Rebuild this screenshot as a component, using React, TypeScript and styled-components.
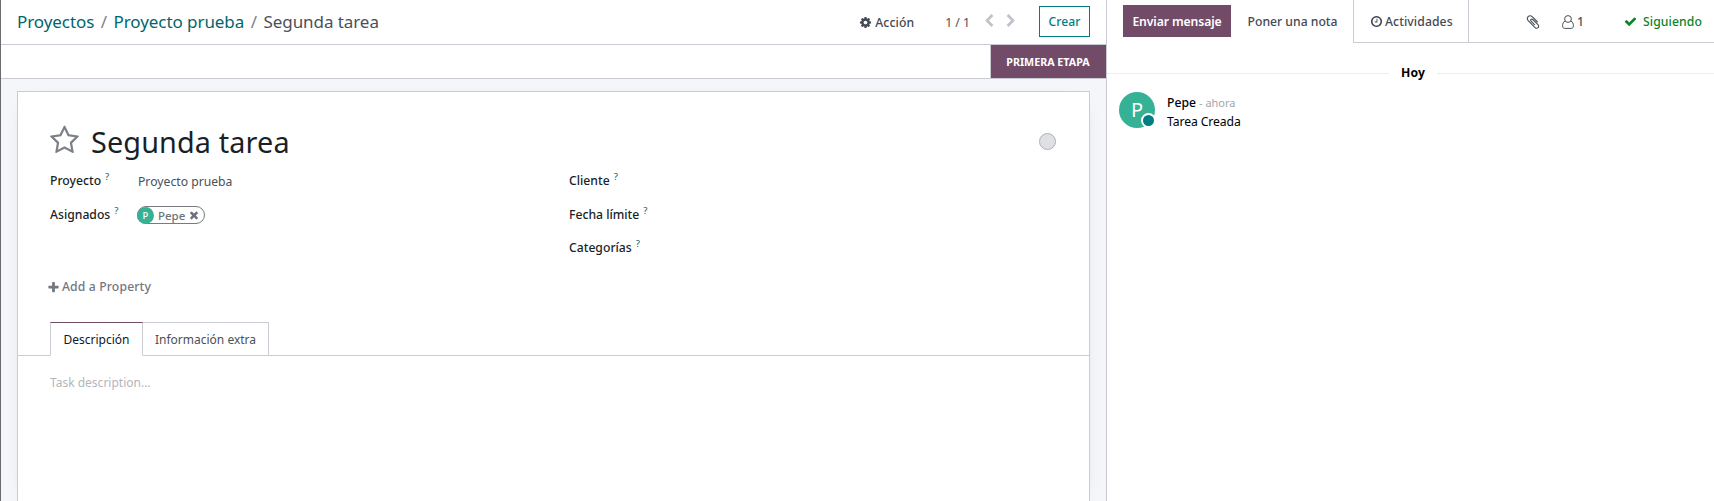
import React from 'react';
import styled, { createGlobalStyle } from 'styled-components';

const GlobalStyle = createGlobalStyle`
  * { box-sizing: border-box; }
  body {
    margin: 0;
    overflow: hidden;
    background: #fff;
    color: #1a1f27;
    font: 400 12.2px/18px "Noto Sans", sans-serif;
  }
`;

const line = '#c9ccd2';
const brand = '#714b67';
const teal = '#017e84';

const ICONS = {
  cog: 'M1152 896q0-106-75-181t-181-75-181 75-75 181 75 181 181 75 181-75 75-181zm512-109v222q0 12-8 23t-20 13l-185 28q-19 54-39 91 35 50 107 138 10 12 10 25t-9 23q-27 37-99 108t-94 71q-12 0-26-9l-138-108q-44 23-91 38-16 136-29 186-7 28-36 28h-222q-14 0-24.5-8.5t-11.5-21.5l-28-184q-49-16-90-37l-141 107q-10 9-25 9-14 0-25-11-126-114-165-168-7-10-7-23 0-12 8-23 15-21 51-66.5t54-70.5q-27-50-41-99l-183-27q-13-2-21-12.5t-8-23.5v-222q0-12 8-23t19-13l186-28q14-46 39-92-40-57-107-138-10-12-10-24 0-10 9-23 26-36 98.5-107.5t94.5-71.5q13 0 26 10l138 107q44-23 91-38 16-136 29-186 7-28 36-28h222q14 0 24.5 8.5t11.5 21.5l28 184q49 16 90 37l142-107q9-9 24-9 13 0 25 10 129 119 165 170 7 8 7 22 0 12-8 23-15 21-51 66.5t-54 70.5q26 50 41 98l183 28q13 2 21 12.5t8 23.5z',
  star: 'M1201 1004l306-297-422-62-189-382-189 382-422 62 306 297-73 421 378-199 377 199zm527-357q0 22-26 48l-363 354 86 500q1 7 1 20 0 50-41 50-19 0-40-12l-449-236-449 236q-22 12-40 12-21 0-31.5-14.5t-10.5-35.5q0-6 2-20l86-500-364-354q-25-27-25-48 0-37 56-46l502-73 225-455q19-41 49-41t49 41l225 455 502 73q56 9 56 46z',
  check: 'M1671 566q0 40-28 68l-724 724-136 136q-28 28-68 28t-68-28l-136-136-362-362q-28-28-28-68t28-68l136-136q28-28 68-28t68 28l294 295 656-657q28-28 68-28t68 28l136 136q28 28 28 68z',
  times: 'M1490 1322q0 40-28 68l-136 136q-28 28-68 28t-68-28l-294-294-294 294q-28 28-68 28t-68-28l-136-136q-28-28-28-68t28-68l294-294-294-294q-28-28-28-68t28-68l136-136q28-28 68-28t68 28l294 294 294-294q28-28 68-28t68 28l136 136q28 28 28 68t-28 68l-294 294 294 294q28 28 28 68z',
  plus: 'M1600 736v192q0 40-28 68t-68 28h-416v416q0 40-28 68t-68 28h-192q-40 0-68-28t-28-68v-416h-416q-40 0-68-28t-28-68v-192q0-40 28-68t68-28h416v-416q0-40 28-68t68-28h192q40 0 68 28t28 68v416h416q40 0 68 28t28 68z',
  clock: 'M1024 544v448q0 14-9 23t-23 9h-320q-14 0-23-9t-9-23v-64q0-14 9-23t23-9h224v-352q0-14 9-23t23-9h64q14 0 23 9t9 23zm416 352q0-148-73-273t-198-198-273-73-273 73-198 198-73 273 73 273 198 198 273 73 273-73 198-198 73-273zm224 0q0 209-103 385.5t-279.5 279.5-385.5 103-385.5-103-279.5-279.5-103-385.5 103-385.5 279.5-279.5 385.5-103 385.5 103 279.5 279.5 103 385.5z',
  clip: 'M1596 1385q0 117-79 196t-196 79q-135 0-235-100l-777-776q-113-115-113-271 0-159 110-270t269-111q158 0 273 113l605 606q10 10 10 22 0 16-30.5 46.5t-46.5 30.5q-13 0-23-10l-606-607q-79-77-181-77-106 0-179 75t-73 181q0 105 76 181l776 777q63 63 145 63 64 0 106-42t42-106q0-82-63-145l-581-581q-26-24-60-24-29 0-48 19t-19 48q0 32 25 59l410 410q10 10 10 22 0 16-31 47t-47 31q-12 0-22-10l-410-410q-63-61-63-149 0-82 57-139t139-57q88 0 149 63l581 581q100 98 100 235z',
  prev: 'M1427 301l-531 531 531 531q19 19 19 45t-19 45l-166 166q-19 19-45 19t-45-19l-742-742q-19-19-19-45t19-45l742-742q19-19 45-19t45 19l166 166q19 19 19 45t-19 45z',
  next: 'M1363 877l-742 742q-19 19-45 19t-45-19l-166-166q-19-19-19-45t19-45l531-531-531-531q-19-19-19-45t19-45l166-166q19-19 45-19t45 19l742 742q19 19 19 45t-19 45z',
};

const Svg = styled.svg`
  display: block;
  flex: none;
  fill: currentColor;
`;

function Icon({ name, size = 13 }: { name: keyof typeof ICONS; size?: number }) {
  return (
    <Svg width={size} height={size} viewBox="0 0 1792 1792" aria-hidden>
      <path d={ICONS[name]} />
    </Svg>
  );
}

const Page = styled.div`
  display: grid;
  grid-template-columns: 1106px 1fr;
  height: 501px;
  border-left: 1px solid #6b6b6f;
`;

const FormView = styled.main`
  display: flex;
  flex-direction: column;
  min-width: 0;
  min-height: 0;
  border-right: 1px solid ${line};
  background: #f5f6fa;
`;

const ControlPanel = styled.header`
  display: flex;
  align-items: center;
  height: 45px;
  padding: 0 16px;
  border-bottom: 1px solid ${line};
  background: #fff;
`;

const Breadcrumb = styled.nav`
  display: flex;
  flex: 1;
  gap: 6.5px;
  font-size: 17px;
  line-height: 24px;
  letter-spacing: -0.07px;
  color: #4b5058;
`;

const Crumb = styled.a`
  color: #01666b;
`;

const Slash = styled.span`
  color: #7c828c;
`;

const ActionButton = styled.button`
  display: flex;
  align-items: center;
  gap: 3px;
  margin-right: 31px;
  padding: 1px 0 0;
  border: 0;
  background: none;
  color: #444a54;
  font: inherit;
  font-weight: 500;
  letter-spacing: 0.1px;
`;

const Pager = styled.div`
  display: flex;
  align-items: center;
  margin-right: 21px;
  padding-top: 1px;
  color: #4b5058;
`;

const PagerArrows = styled.span`
  display: flex;
  gap: 8px;
  margin: -4px 0 0 12px;
  color: #c1c3c9;
`;

const CreateButton = styled.button`
  width: 51px;
  height: 31px;
  margin-top: -1px;
  padding: 1px 0 0;
  border: 1px solid ${teal};
  background: #fff;
  color: ${teal};
  font: inherit;
  font-weight: 500;
`;

const StatusBar = styled.div`
  display: flex;
  justify-content: flex-end;
  height: 34px;
  border-bottom: 1px solid ${line};
  background: #fff;
`;

const Stage = styled.div`
  width: 116px;
  padding-right: 1px;
  border-left: 1px solid ${line};
  background: ${brand};
  color: #fff;
  font-size: 10.7px;
  font-weight: 700;
  line-height: 34px;
  text-align: center;
`;

const Sheet = styled.section`
  flex: 1;
  margin: 12px 16px 0;
  border: 1px solid ${line};
  border-bottom: 0;
  background: #fff;
  box-shadow: 0 5px 20px -15px rgba(0, 0, 0, 0.4);
`;

const TitleRow = styled.div`
  display: flex;
  align-items: center;
  height: 50px;
  margin-top: 25px;
  padding: 0 33px 0 31px;
`;

const StarButton = styled.span`
  margin-top: -4px;
  color: #7b7f87;
`;

const Title = styled.h1`
  flex: 1;
  margin: -1px 0 0 11px;
  font-size: 28.8px;
  font-weight: 400;
  line-height: 40px;
  letter-spacing: 0.13px;
`;

const KanbanState = styled.span`
  width: 17px;
  height: 17px;
  margin-top: -1px;
  border: 1px solid #aeb0b4;
  border-radius: 50%;
  background: #dfe0e4;
`;

const FieldColumns = styled.div`
  display: grid;
  grid-template-columns: 519px 1fr;
  height: 102px;
  padding: 5px 32px 0;
`;

const FieldGroup = styled.div`
  display: grid;
  grid-template-columns: 87px 1fr;
  grid-template-rows: 34px 33px 34px;
  align-content: start;
`;

const Label = styled.label`
  grid-column: 1;
  white-space: nowrap;
  font-weight: 500;
`;

const Help = styled.sup`
  margin-left: 4px;
  color: #01666b;
  font-size: 9.5px;
  font-weight: 400;
  line-height: 0;
  vertical-align: 5px;
`;

const Value = styled.span`
  padding: 1px 0 0 1px;
  color: #4b5058;
`;

const Tag = styled.span`
  display: flex;
  align-items: center;
  width: 68px;
  height: 18px;
  border: 1px solid #777a80;
  border-radius: 9px;
  color: #6e737b;
  font-size: 11.5px;
  font-weight: 500;
`;

const TagAvatar = styled.span`
  width: 17px;
  height: 17px;
  margin: 0 4px 0 -1px;
  border-radius: 50%;
  background: #35b195;
  color: #fff;
  font: 500 9.5px/17px "Noto Sans", sans-serif;
  text-align: center;
`;

const TagName = styled.span`
  margin: 2px 3px 0 0;
`;

const AddProperty = styled.button`
  display: flex;
  align-items: center;
  gap: 2px;
  height: 18px;
  margin: 9px 0 26px 29px;
  padding: 0;
  border: 0;
  background: none;
  color: #73777e;
  font: inherit;
  font-weight: 500;
  letter-spacing: 0.14px;
`;

const Tabs = styled.div`
  display: flex;
  height: 34px;
  padding-left: 32px;
  box-shadow: inset 0 -1px ${line};
`;

const Tab = styled.div<{ $active?: boolean; $width: number }>`
  width: ${p => p.$width}px;
  border: 1px solid ${line};
  border-left-width: ${p => (p.$active ? '1px' : '0')};
  border-top-color: ${p => (p.$active ? brand : line)};
  border-bottom-color: ${p => (p.$active ? '#fff' : line)};
  background: #fff;
  color: ${p => (p.$active ? '#111827' : '#4b5058')};
  font-size: 12px;
  line-height: 34px;
  text-align: center;
`;

const Description = styled.p`
  margin: 18px 0 0 32px;
  color: #b3b6bc;
  font-size: 12px;
`;

const Chatter = styled.aside`
  min-width: 0;
`;

const Toolbar = styled.div`
  display: flex;
  height: 43px;
`;

const SendButton = styled.button`
  width: 108px;
  height: 32px;
  margin: 5px 0 0 16px;
  padding: 1px 0 0;
  border: 0;
  background: ${brand};
  color: #fff;
  font: inherit;
  font-weight: 600;
  letter-spacing: -0.1px;
`;

const NoteButton = styled.button`
  width: 122px;
  padding: 1px 0 0 1px;
  border: 0;
  background: none;
  color: #444a54;
  font: inherit;
  font-weight: 500;
`;

const ActivityButton = styled.div`
  display: flex;
  align-items: center;
  gap: 2px;
  width: 116px;
  padding: 1px 0 0 16px;
  border: 1px solid ${line};
  border-top: 0;
  color: #444a54;
  font-weight: 500;
  letter-spacing: 0.1px;
`;

const ToolbarEnd = styled.div`
  display: flex;
  flex: 1;
  align-items: center;
  padding: 1px 12px 0 56px;
  border-bottom: 1px solid ${line};
  color: #4b5058;
`;

const Followers = styled.span`
  display: flex;
  align-items: center;
  gap: 3px;
  margin-left: 21px;
  font-weight: 500;
`;

const Following = styled.span`
  display: flex;
  align-items: center;
  gap: 6px;
  margin-left: auto;
  color: #0a8426;
  font-weight: 500;
  letter-spacing: 0.1px;
`;

const DateDivider = styled.div`
  display: flex;
  align-items: center;
  gap: 12px;
  height: 20px;
  margin-top: 20px;
  color: #000;
  font-weight: 700;
  letter-spacing: 0.1px;

  &::before,
  &::after {
    content: '';
    flex: 1;
    height: 1px;
    background: #ededf0;
  }

  &::before {
    flex: 0 0 282px;
  }
`;

const Message = styled.article`
  display: flex;
  gap: 12px;
  padding: 9px 12px;
`;

const Avatar = styled.div`
  position: relative;
  width: 36px;
  height: 36px;
  border-radius: 50%;
  background: #35b195;
  color: #fff;
  font-size: 20px;
  line-height: 36px;
  text-align: center;
`;

const Presence = styled.span`
  position: absolute;
  right: -1px;
  bottom: 0;
  width: 15px;
  height: 15px;
  border: 2.5px solid #fff;
  border-radius: 50%;
  background: ${teal};
`;

const MessageBody = styled.div`
  padding-top: 1px;
  color: #000;
  line-height: 19px;
`;

const Author = styled.span`
  font-weight: 500;
`;

const Time = styled.span`
  margin-left: 3px;
  color: #a3a6ab;
  font-size: 11px;
`;

const Note = styled.div`
  letter-spacing: -0.1px;
`;

function Field({ label }: { label: string }) {
  return (
    <Label>
      {label}
      <Help>?</Help>
    </Label>
  );
}

export default function App() {
  return (
    <>
      <GlobalStyle />
      <Page>
        <FormView>
          <ControlPanel>
            <Breadcrumb>
              <Crumb>Proyectos</Crumb>
              <Slash>/</Slash>
              <Crumb>Proyecto prueba</Crumb>
              <Slash>/</Slash>
              <span>Segunda tarea</span>
            </Breadcrumb>
            <ActionButton>
              <Icon name="cog" />
              Acción
            </ActionButton>
            <Pager>
              1 / 1
              <PagerArrows>
                <Icon name="prev" size={14} />
                <Icon name="next" size={14} />
              </PagerArrows>
            </Pager>
            <CreateButton>Crear</CreateButton>
          </ControlPanel>
          <StatusBar>
            <Stage>PRIMERA ETAPA</Stage>
          </StatusBar>
          <Sheet>
            <TitleRow>
              <StarButton>
                <Icon name="star" size={31} />
              </StarButton>
              <Title>Segunda tarea</Title>
              <KanbanState />
            </TitleRow>
            <FieldColumns>
              <FieldGroup>
                <Field label="Proyecto" />
                <Value>Proyecto prueba</Value>
                <Field label="Asignados" />
                <Tag>
                  <TagAvatar>P</TagAvatar>
                  <TagName>Pepe</TagName>
                  <Icon name="times" size={12} />
                </Tag>
              </FieldGroup>
              <FieldGroup>
                <Field label="Cliente" />
                <Field label="Fecha límite" />
                <Field label="Categorías" />
              </FieldGroup>
            </FieldColumns>
            <AddProperty>
              <Icon name="plus" />
              Add a Property
            </AddProperty>
            <Tabs>
              <Tab $active $width={93}>Descripción</Tab>
              <Tab $width={126}>Información extra</Tab>
            </Tabs>
            <Description>Task description...</Description>
          </Sheet>
        </FormView>
        <Chatter>
          <Toolbar>
            <SendButton>Enviar mensaje</SendButton>
            <NoteButton>Poner una nota</NoteButton>
            <ActivityButton>
              <Icon name="clock" />
              Actividades
            </ActivityButton>
            <ToolbarEnd>
              <Icon name="clip" size={16} />
              <Followers>
                <Svg width="12" height="14" viewBox="0 0 12 14" aria-hidden>
                  <g fill="none" stroke="currentColor">
                    <circle cx="6" cy="4" r="3.4" />
                    <path d="M3.2 6.2C1.2 6.6.6 8.8.6 10.9c0 1.5.8 2.5 2 2.5h6.8c1.2 0 2-1 2-2.5 0-2.1-.6-4.3-2.6-4.7" />
                  </g>
                </Svg>
                1
              </Followers>
              <Following>
                <Icon name="check" />
                Siguiendo
              </Following>
            </ToolbarEnd>
          </Toolbar>
          <DateDivider>Hoy</DateDivider>
          <Message>
            <Avatar>
              P
              <Presence />
            </Avatar>
            <MessageBody>
              <Author>Pepe</Author>
              <Time>- ahora</Time>
              <Note>Tarea Creada</Note>
            </MessageBody>
          </Message>
        </Chatter>
      </Page>
    </>
  );
}
